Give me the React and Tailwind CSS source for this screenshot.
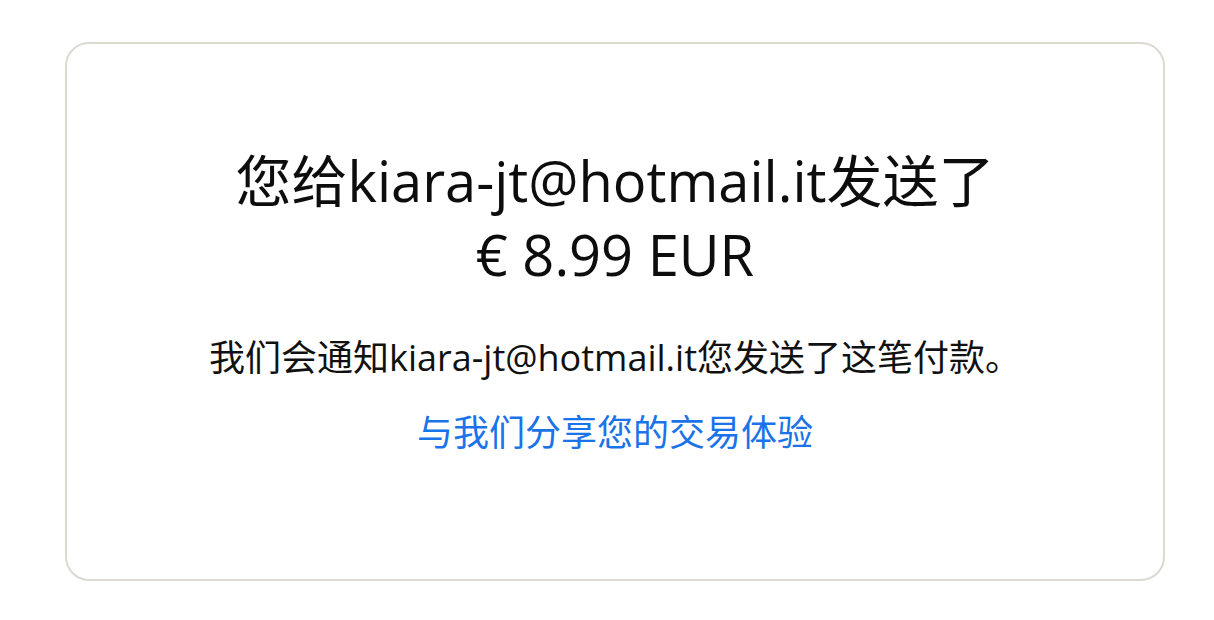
export default function App() {
  const font = { fontFamily: '"Open Sans", "Noto Sans CJK SC", sans-serif' };

  return (
    <div className="min-h-[620px] w-full bg-white pt-[42px] pl-[65px] pr-[49px]" style={font}>
      <div className="h-[539px] rounded-[24px] border-2 border-[#dcd9d1] flex flex-col items-center pt-[99px]">
        <h1 className="text-[56px] leading-[74px] text-[#0d0d0d] text-center">
          您给kiara-jt@hotmail.it发送了
          <br />
          € 8.99 EUR
        </h1>

        <p className="mt-[45px] text-[36px] leading-[44px] text-[#111] text-center">
          我们会通知kiara-jt@hotmail.it您发送了这笔付款。
        </p>

        <a href="#" className="mt-[31px] text-[36px] leading-[44px] text-[#1a73e8]">
          与我们分享您的交易体验
        </a>
      </div>
    </div>
  );
}
